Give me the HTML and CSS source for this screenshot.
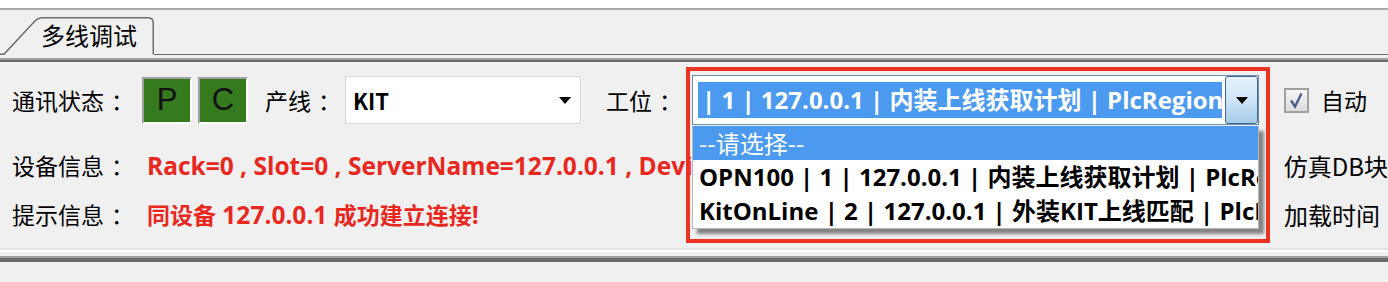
FILE: index.html
```html
<!DOCTYPE html>
<html lang="zh-CN">
<head>
    <meta charset="UTF-8">
    <title>多线调试</title>
    <link rel="stylesheet" href="styles.css">
</head>
<body>
<div class="window">
  <div class="topstrip"></div>

  <!-- tab header -->
  <div class="tabbar">
    <div class="tabrow">
      <div class="tab">
        <svg class="tab-shape" width="154" height="38" viewBox="0 0 154 38">
          <path d="M0,37.25 L4,37.25 L34,5 Q37.5,0.75 43,0.75 L148,0.75 Q153.25,0.75 153.25,6 L153.25,37.25" fill="#f0f0f0" stroke="#6c6c6c" stroke-width="1.5"/>
        </svg>
        <span class="tab-text">多线调试</span>
      </div>
      <div class="tabrest"></div>
    </div>
    <div class="tabline"></div>
  </div>

  <div class="panel">
    <!-- connection row -->
    <div class="row row-main">
      <span class="label label-status">通讯状态<span class="colon">：</span></span>
      <span class="lamp">P</span>
      <span class="lamp">C</span>
      <span class="label label-line">产线<span class="colon">：</span></span>
      <div class="combo line-combo">
        <span class="combo-text">KIT</span>
        <span class="arrow"></span>
      </div>
      <span class="label label-station">工位<span class="colon">：</span></span>
      <div class="station">
        <div class="combo station-combo">
          <span class="selected-text">| 1 | 127.0.0.1 | 内装上线获取计划 | PlcRegion</span>
          <span class="drop-btn"><span class="arrow"></span></span>
        </div>
        <ul class="droplist">
          <li class="active">--请选择--</li>
          <li>OPN100 | 1 | 127.0.0.1 | 内装上线获取计划 | PlcRegion</li>
          <li>KitOnLine | 2 | 127.0.0.1 | 外装KIT上线匹配 | PlcRegion</li>
        </ul>
        <div class="mark"></div>
      </div>
      <label class="check">
        <span class="check-box">
          <svg width="21" height="21" viewBox="0 0 21 21">
            <path d="M5,10.5 L9,16.5 L15.5,3.5" fill="none" stroke="#4b5d8e" stroke-width="2.4"/>
          </svg>
        </span>
        <span class="label">自动</span>
      </label>
    </div>

    <!-- info rows -->
    <div class="row info-row">
      <span class="label">设备信息<span class="colon">：</span></span>
      <span class="value">Rack=0 , Slot=0 , ServerName=127.0.0.1 , DeviceName=PLC_1</span>
      <span class="label side">仿真DB块</span>
    </div>
    <div class="row info-row">
      <span class="label">提示信息<span class="colon">：</span></span>
      <span class="value"><span class="cjk">同设备</span> 127.0.0.1 <span class="cjk">成功建立连接</span>!</span>
      <span class="label side">加载时间</span>
    </div>
  </div>

  <div class="bottom">
    <div class="bottom-line"></div>
  </div>
</div>
</body>
</html>
```

FILE: styles.css
```css
/* Base */
* {
    box-sizing: border-box;
}

body {
    margin: 0;
    width: 1388px;
    height: 282px;
    overflow: hidden;
    background-color: #f0f0f0;
    font-family: "Open Sans", "Noto Sans CJK SC", sans-serif;
    color: #000;
}

/* Top strip */
.topstrip {
    height: 10px;
    background-color: #fff;
    border-bottom: 2px solid #a9a9a9;
}

/* Tab header */
.tabbar {
    height: 52px;
}

.tabrow {
    display: flex;
    align-items: flex-end;
    height: 45px;
}

.tab {
    position: relative;
    width: 154px;
    height: 38px;
    padding: 5px 0 0 41px;
}

.tab-shape {
    position: absolute;
    left: 0;
    top: 0;
}

.tab-text {
    position: relative;
    font-family: "Noto Sans CJK SC", sans-serif;
    font-size: 24px;
    line-height: 26px;
}

.tabrest {
    flex: 1;
    height: 38px;
    border-bottom: 1.5px solid #6c6c6c;
}

.tabline {
    margin-top: 3px;
    height: 4px;
    border-top: 2px solid #a0a0a0;
    border-bottom: 2px solid #6a6a6a;
}

/* Panel */
.panel {
    padding: 13px 0 0 12px;
    height: 186px;
}

.row {
    display: flex;
    align-items: center;
}

.label {
    font-family: "Noto Sans CJK SC", sans-serif;
    font-size: 23px;
    white-space: nowrap;
}

/* full-width colon sits further right in the original font */
.colon {
    margin-left: 7px;
}

.row-main {
    height: 50px;
}

.label-status {
    width: 130px;
}

/* Status lamps */
.lamp {
    width: 50px;
    height: 47px;
    margin-right: 6px;
    border-top: 2px solid #a0a0a0;
    border-left: 2px solid #a0a0a0;
    border-bottom: 2px solid #fff;
    border-right: 2px solid #fff;
    background-color: #367a20;
    font-family: "Liberation Sans", sans-serif;
    font-size: 31px;
    line-height: 42px;
    text-align: center;
    color: #111;
}

.label-line {
    margin-left: 11px;
    width: 80px;
}

/* Combo boxes */
.combo {
    display: flex;
    align-items: center;
    background-color: #fff;
}

.line-combo {
    width: 236px;
    height: 48px;
    padding: 0 9px 0 7px;
    border: 1px solid #dadada;
}

.combo-text {
    flex: 1;
    font-family: "Noto Sans CJK SC", sans-serif;
    font-weight: bold;
    font-size: 22px;
}

.arrow {
    width: 0;
    height: 0;
    border-left: 6px solid transparent;
    border-right: 6px solid transparent;
    border-top: 7px solid #000;
}

.label-station {
    margin-left: 25px;
    width: 86px;
}

.station {
    position: relative;
    z-index: 2;
    width: 567px;
    height: 50px;
}

.station-combo {
    height: 50px;
    padding: 0 0 0 5px;
    border: 1px solid #6f8fb0;
}

.selected-text {
    flex: 1;
    height: 36px;
    margin-right: 3px;
    padding-left: 4px;
    overflow: hidden;
    white-space: nowrap;
    background-color: #4c9af0;
    color: #fff;
    font-weight: bold;
    font-size: 24px;
    line-height: 35px;
}

.drop-btn {
    display: flex;
    align-items: center;
    justify-content: center;
    width: 33px;
    height: 48px;
    border: 1px solid #3f6890;
    border-radius: 3px;
    background: linear-gradient(#e6f2fc, #cfe5f6 50%, #a3cbe8);
}

/* Opened dropdown list */
.droplist {
    position: absolute;
    left: 0;
    top: 51px;
    width: 567px;
    margin: 0;
    padding: 0;
    list-style: none;
    background-color: #fff;
    border: 1px solid #b9b9b9;
    border-top: none;
    box-shadow: 5px 5px 3px rgba(0, 0, 0, 0.45);
}

.droplist li {
    height: 34px;
    padding-left: 6px;
    overflow: hidden;
    white-space: nowrap;
    font-weight: bold;
    font-size: 24px;
    line-height: 33px;
}

.droplist li.active {
    background-color: #4c9af0;
    color: #fff;
    font-weight: normal;
    font-family: "Noto Sans CJK SC", sans-serif;
}

/* Red annotation frame */
.mark {
    position: absolute;
    left: -6px;
    top: -8px;
    width: 584px;
    height: 176px;
    border: 4px solid #ea3323;
    pointer-events: none;
}

/* Checkbox */
.check {
    display: flex;
    align-items: center;
    margin-left: 25px;
}

.check-box {
    width: 25px;
    height: 25px;
    margin-right: 12px;
    border: 2px solid #a0a0a0;
    background: linear-gradient(#f6f6f6, #dcdcdc);
}

.check-box svg {
    display: block;
}

/* Info rows */
.info-row {
    height: 36px;
}

.row-main + .info-row {
    margin-top: 22px;
}

.info-row + .info-row {
    margin-top: 13px;
}

.info-row .label {
    width: 135px;
}

.value {
    width: 1137px;
    overflow: hidden;
    white-space: nowrap;
    color: #e8281f;
    font-weight: bold;
    font-size: 24.5px;
}

.value .cjk {
    font-size: 23px;
}

.info-row .side {
    width: auto;
    font-size: 24px;
}

/* Bottom */
.bottom {
    height: 34px;
    border-top: 2px solid #e3e3e3;
}

.bottom-line {
    height: 12px;
    border-top: 2px solid #fff;
    border-bottom: 4px solid #6a6a6a;
    box-shadow: inset 0 -2px 0 #a0a0a0;
}
```
